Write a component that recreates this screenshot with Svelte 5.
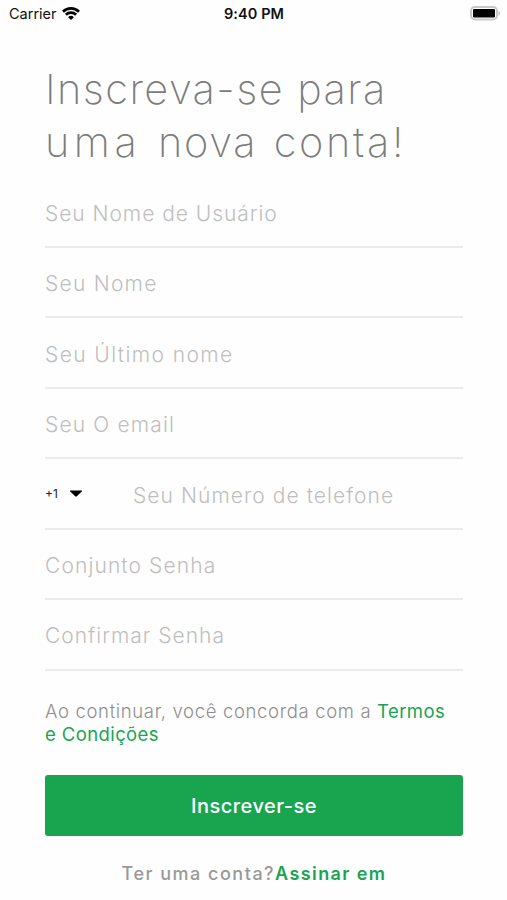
<script>
  // Tela de cadastro: barra de status, formulário e link para login.
  let form = $state({
    usuario: '',
    nome: '',
    sobrenome: '',
    email: '',
    telefone: '',
    senha: '',
    confirmar: ''
  });

  // ls = espaçamento entre letras do placeholder (px)
  const campos = [
    { id: 'usuario', rotulo: 'Seu Nome de Usuário', tipo: 'text', ls: 0.96 },
    { id: 'nome', rotulo: 'Seu Nome', tipo: 'text', ls: 1.25 },
    { id: 'sobrenome', rotulo: 'Seu Último nome', tipo: 'text', ls: 1.4 },
    { id: 'email', rotulo: 'Seu O email', tipo: 'email', ls: 1.15 },
    { id: 'telefone', rotulo: 'Seu Número de telefone', tipo: 'tel', ls: 1.06 },
    { id: 'senha', rotulo: 'Conjunto Senha', tipo: 'password', ls: 1.1 },
    { id: 'confirmar', rotulo: 'Confirmar Senha', tipo: 'password', ls: 1 }
  ];
</script>

<div class="tela">
  <header class="status">
    <div class="operadora">
      <span>Carrier</span>
      <svg class="wifi" viewBox="0 0 18 13" aria-hidden="true">
        <path d="M1 4.700a11.400 11.400 0 0 1 16 0" />
        <path d="M3.900 7.700a7.300 7.300 0 0 1 10.200 0" />
        <path class="ponto" d="M9 13 6.100 10.200a4.200 4.200 0 0 1 5.800 0z" />
      </svg>
    </div>
    <span class="hora">9:40 PM</span>
    <svg class="bateria" viewBox="0 0 32 15" aria-hidden="true">
      <rect class="corpo" x="2" y="1" width="26" height="12.500" rx="4" />
      <rect x="4" y="3" width="22" height="8.500" rx="1.200" />
      <path class="polo" d="M29.500 5c2.200.8 2.200 3.800 0 4.600z" />
    </svg>
  </header>

  <main>
    <h1>
      <span class="l1">Inscreva-se para</span><br />
      <span class="uma">uma</span> <span class="nova">nova</span> <span class="conta">conta!</span>
    </h1>

    <form onsubmit={(e) => e.preventDefault()}>
      {#each campos as c}
        <div class="campo">
          {#if c.id === 'telefone'}
            <button type="button" class="ddi">
              <span>+1</span>
              <svg viewBox="0 0 12 7" aria-hidden="true"><path d="M0 .4h12v.8L6.600 6.600H5.400L0 1.200z" /></svg>
            </button>
          {/if}
          <input type={c.tipo} placeholder={c.rotulo} aria-label={c.rotulo} style:letter-spacing="{c.ls}px" bind:value={form[c.id]} />
        </div>
      {/each}

      <p class="termos">
        Ao continuar, você concorda com a <a href="#termos">Termos<br />e Condições</a>
      </p>

      <button type="submit" class="enviar">Inscrever-se</button>
    </form>

    <p class="login"><span>Ter uma conta?</span><a href="#login">Assinar em</a></p>
  </main>
</div>

<style>
  :global(body) { background: #fefefe; }
  .tela { height: 900px; overflow: hidden; font-family: Inter, "Open Sans", sans-serif; color: #8f8f8f; }
  .status { display: grid; grid-template-columns: 1fr auto 1fr; align-items: center; height: 27px; padding: 0 6px 0 9px; color: #111; font-size: 14.500px; line-height: 27px; }
  .operadora { display: flex; align-items: center; gap: 5px; }
  .wifi { width: 18px; height: 13px; fill: none; stroke: #000; stroke-width: 2.700; }
  .wifi .ponto { fill: #000; stroke: none; }
  .hora { font-weight: 600; letter-spacing: 0.1px; margin-right: 2px; }
  .bateria { justify-self: end; width: 32px; height: 15px; }
  .bateria .corpo { fill: #fff; stroke: #c8c8c8; stroke-width: 2; }
  .bateria .polo { fill: #c4c4c4; }
  main { padding: 36px 44px 0 45px; }
  h1 { margin: 0; font-size: 41.500px; line-height: 53px; font-weight: 200; color: #7c7c7c; white-space: nowrap; word-spacing: 5px; }
  .l1 { letter-spacing: 1.450px; word-spacing: 0; }
  .uma { letter-spacing: 4.500px; }
  .nova { letter-spacing: 1.700px; }
  .conta { letter-spacing: 2.600px; }
  form { padding-top: 8.600px; }
  .campo { display: flex; box-sizing: border-box; height: 70.450px; border-bottom: 2px solid #ebebeb; }
  .campo input { flex: 1; min-width: 0; padding: 3px 0 0; border: 0; outline: 0; background: none; font: 300 21px Inter, "Open Sans", sans-serif; color: #555; }
  .campo input::placeholder { color: #bebebe; opacity: 1; }
  .ddi { display: flex; align-items: center; gap: 12px; width: 88px; padding: 0; border: 0; background: none; font: 400 12px Inter, "Open Sans", sans-serif; color: #222; }
  .ddi svg { width: 12px; height: 7px; fill: #000; }
  .termos { margin: 29px 0 0; font-size: 18.500px; line-height: 23px; font-weight: 300; color: #8f8f8f; letter-spacing: 0.650px; white-space: nowrap; }
  a { color: #19a550; text-decoration: none; }
  .termos a { font-weight: 400; letter-spacing: 0.400px; }
  .enviar { display: block; width: 100%; height: 61px; margin-top: 29.800px; padding: 1px 0 0; border: 0; border-radius: 3px; background: #19a550; color: #fff; font: 500 20px Inter, "Open Sans", sans-serif; letter-spacing: 0.500px; }
  .login { margin: 25.700px 0 0; text-align: center; font-size: 18px; line-height: 23px; font-weight: 500; color: #999; letter-spacing: 1.500px; white-space: nowrap; }
  .login a { font-weight: 600; letter-spacing: 1.400px; }
</style>
